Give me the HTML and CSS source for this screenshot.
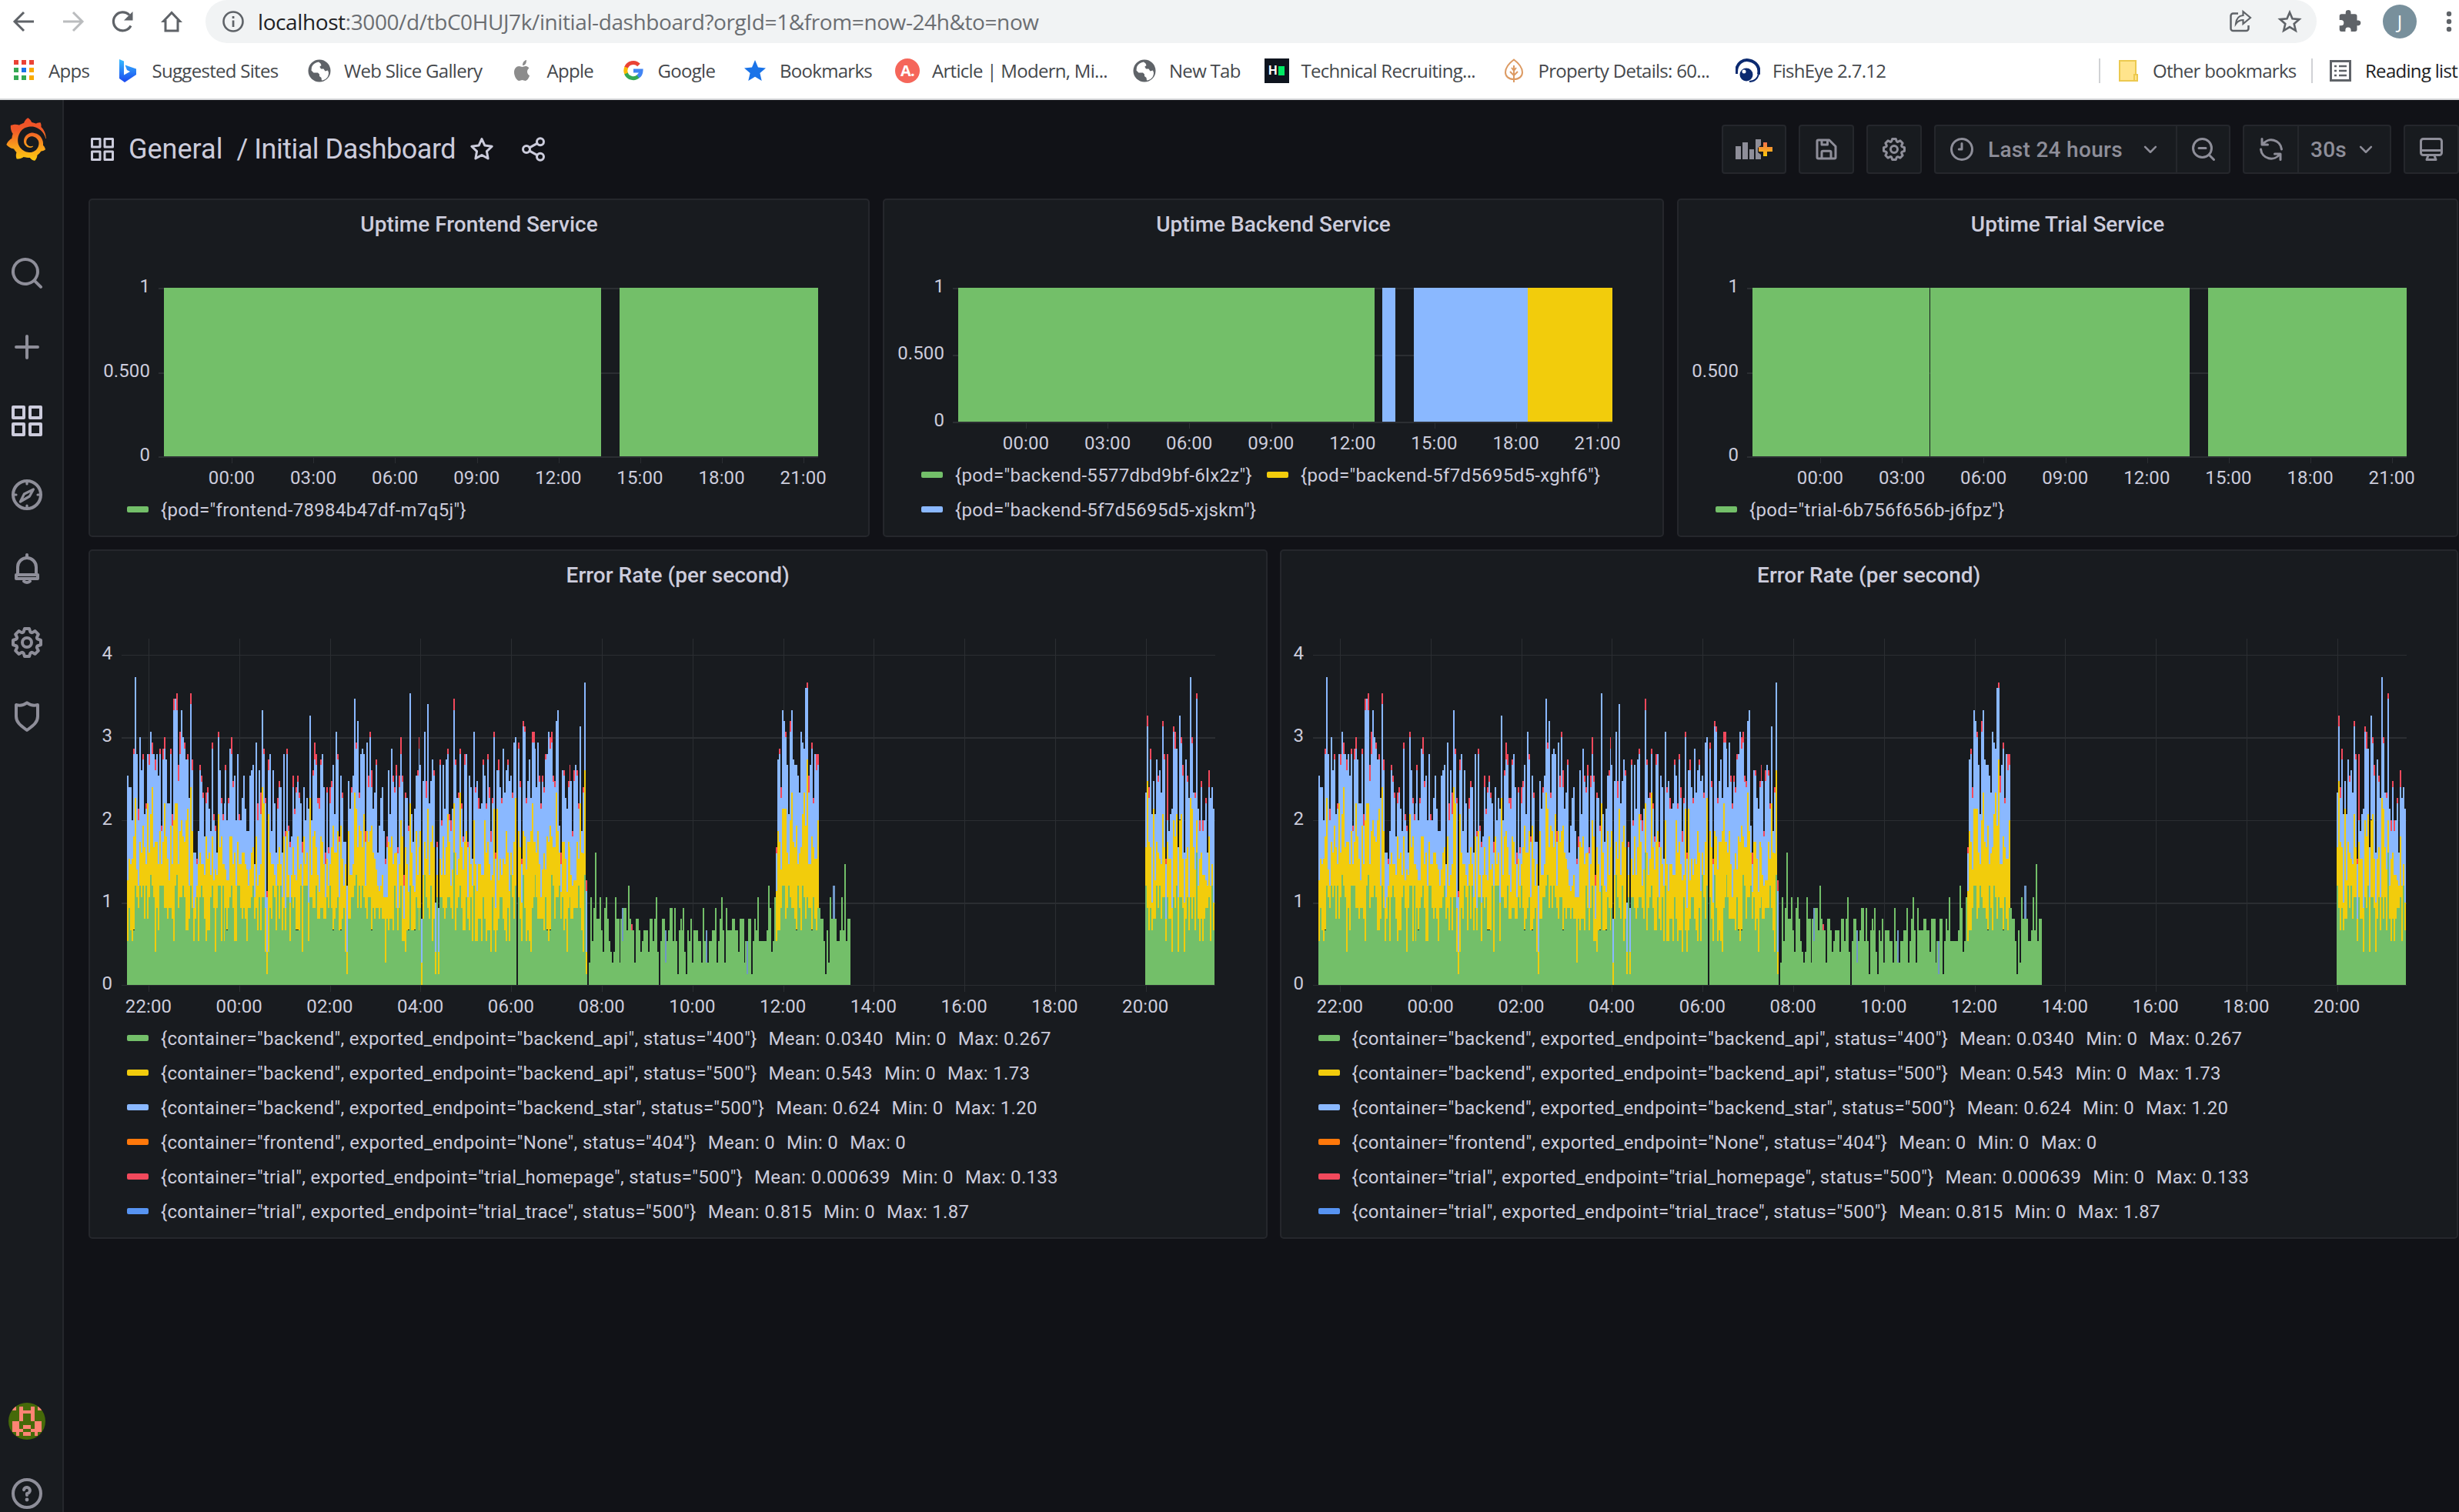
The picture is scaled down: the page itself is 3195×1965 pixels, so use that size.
FILE: index.html
```html
<!DOCTYPE html>
<html lang="en">
<head>
<meta charset="utf-8">
<title>Initial Dashboard - Grafana</title>
<link rel="stylesheet" href="styles.css">
</head>
<body>
<svg class="defs" width="0" height="0">
  <defs>
    <linearGradient id="logo-fill" x1="0" y1="1" x2="0" y2="0"><stop offset="0" stop-color="#fcc911"/><stop offset=".35" stop-color="#f99b1c"/><stop offset=".7" stop-color="#f05a28"/><stop offset="1" stop-color="#f04e28"/></linearGradient>
    <linearGradient id="plus-fill" x1="0" y1="0" x2="0" y2="1"><stop offset="0" stop-color="#f2704a"/><stop offset="1" stop-color="#fbca0a"/></linearGradient>
    <linearGradient id="bing-fill" x1="0" y1="0" x2="0" y2="1"><stop offset="0" stop-color="#37bdff"/><stop offset="1" stop-color="#1b48ef"/></linearGradient>
  </defs>
  <symbol id="apps" viewBox="0 0 24 24"><path d="M3 3h7v7H3zM14 3h7v7h-7zM3 14h7v7H3zM14 14h7v7h-7z" class="ln"/></symbol>
  <symbol id="cog" viewBox="0 0 24 24"><path fill="currentColor" d="M21.32,9.55l-1.89-.63.89-1.78A1,1,0,0,0,20.13,6L18,3.87a1,1,0,0,0-1.15-.19l-1.78.89-.63-1.89A1,1,0,0,0,13.5,2h-3a1,1,0,0,0-.95.68L8.92,4.57,7.14,3.68A1,1,0,0,0,6,3.87L3.87,6a1,1,0,0,0-.19,1.15l.89,1.78-1.89.63A1,1,0,0,0,2,10.5v3a1,1,0,0,0,.68.95l1.89.63-.89,1.78A1,1,0,0,0,3.87,18L6,20.13a1,1,0,0,0,1.15.19l1.78-.89.63,1.89a1,1,0,0,0,.95.68h3a1,1,0,0,0,.95-.68l.63-1.89,1.78.89A1,1,0,0,0,18,20.13L20.13,18a1,1,0,0,0,.19-1.15l-.89-1.78,1.89-.63A1,1,0,0,0,22,13.5v-3A1,1,0,0,0,21.32,9.55ZM20,12.78l-1.2.4A2,2,0,0,0,17.64,16l.57,1.14-1.1,1.1L16,17.64a2,2,0,0,0-2.79,1.16l-.4,1.2H11.22l-.4-1.2A2,2,0,0,0,8,17.64l-1.14.57-1.1-1.1L6.36,16A2,2,0,0,0,5.2,13.18L4,12.78V11.22l1.2-.4A2,2,0,0,0,6.36,8L5.79,6.89l1.1-1.1L8,6.36A2,2,0,0,0,10.82,5.2l.4-1.2h1.56l.4,1.2A2,2,0,0,0,16,6.36l1.14-.57,1.1,1.1L17.64,8a2,2,0,0,0,1.16,2.79l1.2.4ZM12,8a4,4,0,1,0,4,4A4,4,0,0,0,12,8Zm0,6a2,2,0,1,1,2-2A2,2,0,0,1,12,14Z"/></symbol>
  <symbol id="globe" viewBox="0 0 32 32"><circle cx="16" cy="16" r="14.5" fill="#5f6368"/><path fill="#fff" d="M15 4.5c-4 .5-7 2.500-9 6.500l-.5 4.500 3 3h5.500l2 2v2.500l2.500 2 .5 3.500c5-.5 9-4 9-10l-1-3-3.500 1-2-3h-4.500l-1.500-2 3-2.500-1-2.500z M15 9l-3 2 .5 3 4 2 2-.5-1-3z"/></symbol>
</svg>

<header class="browser">
  <div class="toolbar">
    <svg class="nav" viewBox="0 0 40 40"><path d="M33 20H9M20 8L8 20l12 12" fill="none" stroke="#5f6368" stroke-width="3"/></svg>
    <svg class="nav" viewBox="0 0 40 40"><path d="M7 20h24M20 8l12 12-12 12" fill="none" stroke="#babcbe" stroke-width="3"/></svg>
    <svg class="nav" viewBox="0 0 40 40"><path d="M31 25.500A12 12 0 1 1 29 11.500" fill="none" stroke="#5f6368" stroke-width="3.200"/><path d="M33.500 7v11.500H22z" fill="#5f6368"/></svg>
    <svg class="nav" viewBox="0 0 40 40"><path d="M20 8.500L9.500 19.500H12V32h16V19.500h2.500z" fill="none" stroke="#5f6368" stroke-width="3"/></svg>
    <div class="omnibox">
      <svg class="i32" viewBox="0 0 32 32"><circle cx="16" cy="16" r="12.500" fill="none" stroke="#5f6368" stroke-width="2.600"/><path d="M14.700 14.500h2.700V23h-2.700zM14.700 9h2.700v2.900h-2.700z" fill="#5f6368"/></svg>
      <span class="url"><b>localhost</b>:3000/d/tbC0HUJ7k/initial-dashboard?orgId=1&amp;from=now-24h&amp;to=now</span>
      <svg class="i32" viewBox="0 0 32 32"><path d="M13 5.500H6.500a3 3 0 0 0-3 3v16.500a3 3 0 0 0 3 3h17a3 3 0 0 0 3-3v-4" fill="none" stroke="#5f6368" stroke-width="2.500"/><path d="M19.500 3l9.500 8-9.500 8v-5c-4 0-7 1.500-9.500 5 .5-6 3.500-10.500 9.500-11z" fill="none" stroke="#5f6368" stroke-width="2.200"/></svg>
      <svg class="i32" viewBox="0 0 32 32"><path d="M16 4l3.500 8.300 9 .8-6.800 5.900 2.100 8.800-7.800-4.700-7.800 4.700 2.100-8.800-6.800-5.900 9-.8z" fill="none" stroke="#5f6368" stroke-width="2.600"/></svg>
    </div>
    <svg class="nav" viewBox="0 0 40 40"><path fill="#5f6368" d="M30.500 18.500h-2V13a2.700 2.700 0 0 0-2.700-2.700h-5.300v-2a3.400 3.400 0 0 0-6.800 0v2H8.300A2.700 2.700 0 0 0 5.700 13v5.100h2a3.600 3.600 0 0 1 0 7.200h-2v5.100A2.700 2.700 0 0 0 8.300 33h5.100v-2a3.600 3.600 0 0 1 7.200 0v2h5.200a2.700 2.700 0 0 0 2.700-2.700v-5.100h2a3.400 3.400 0 0 0 0-6.700z"/></svg>
    <span class="profile">J</span>
    <svg class="nav" viewBox="0 0 40 40" fill="#5f6368"><circle cx="20" cy="10" r="3.200"/><circle cx="20" cy="20" r="3.200"/><circle cx="20" cy="30" r="3.200"/></svg>
  </div>
  <nav class="bookmarks">
    <a><svg class="i32" viewBox="0 0 32 32"><path fill="#ea4335" d="M3 2h6v6H3zM13 2h6v6h-6zM23 2h6v6h-6z"/><path fill="#34a853" d="M3 12h6v6H3zM3 22h6v6H3z"/><path fill="#1a73e8" d="M13 12h6v6h-6z"/><path fill="#f9ab00" d="M23 12h6v6h-6zM23 22h6v6h-6z"/><path fill="#34a853" d="M13 22h6v6h-6z"/></svg>Apps</a>
    <a><svg class="i32" viewBox="0 0 32 32"><path fill="url(#bing-fill)" d="M5 1l6 2.500v18L19 17l-4-2-2.500-6.500L27 13.500V21L12 31l-7-5z"/></svg>Suggested Sites</a>
    <a><svg class="i32"><use href="#globe"/></svg>Web Slice Gallery</a>
    <a><svg class="i32" viewBox="0 0 32 32"><path fill="#8c8c8c" d="M22 17c0-3 2.500-4.500 2.500-4.500C23 10.500 21 10 20 10c-2 0-3.500 1-4.500 1s-2.500-1-4-1C8 10 5 13 5 18s3.500 11 6.500 11c1.500 0 2.500-1 4-1s2.500 1 4 1c3 0 5.500-5.500 5.500-7 0 0-3-1.300-3-5zM19.500 7.500C21 6 21 3 21 2c-1.500 0-5 2-5 7 1.500 0 2.500-.5 3.500-1.500z"/></svg>Apple</a>
    <a><svg class="i32" viewBox="0 0 32 32" fill="none" stroke-width="5"><path stroke="#ea4335" d="M6.500 12A10 10 0 0 1 23 8.500"/><path stroke="#fbbc05" d="M6.800 20a10 10 0 0 1 0-8.500"/><path stroke="#34a853" d="M6.500 19.500A10 10 0 0 0 22.500 23"/><path stroke="#4285f4" d="M16 16h10a10 10 0 0 1-4 7.500"/></svg>Google</a>
    <a><svg class="i32" viewBox="0 0 32 32"><path fill="#1a73e8" d="M16 2l4 9.500 10 .9-7.600 6.600 2.300 10L16 23.700 7.300 29l2.300-10L2 12.400l10-.9z"/></svg>Bookmarks</a>
    <a><span class="badge-a">A.</span>Article | Modern, Mi...</a>
    <a><svg class="i32"><use href="#globe"/></svg>New Tab</a>
    <a><span class="badge-h"><i>H</i><s></s></span>Technical Recruiting...</a>
    <a><svg class="i32" viewBox="0 0 32 32"><path d="M16 1.500C10 6 5 12 5 18c0 5 4 9 11 9s11-4 11-9c0-6-5-12-11-16.500zM16 31V9M16 22l-5-5M16 22l5-5M16 16l-3-4M16 16l3-4" fill="none" stroke="#dc9a62" stroke-width="2"/></svg>Property Details: 60...</a>
    <a><svg class="i32" viewBox="0 0 32 32"><path fill="none" stroke="#0b2a70" stroke-width="4" d="M1 20C0 4 12 1 18 2.500c9 2 14 9 12 18"/><path fill="none" stroke="#0b2a70" stroke-width="2" d="M30 18c0 8-6 12-12 12"/><circle cx="14" cy="21" r="8.500" fill="#0b2a70"/><circle cx="11" cy="17" r="2.500" fill="#fff"/></svg>FishEye 2.7.12</a>
    <a class="sep"><svg class="i32" viewBox="0 0 32 32"><path d="M5 3h21v18h2v8H5z" fill="#ffe48c" stroke="#ecc94f" stroke-width="2"/><path d="M24 29v-8h3" fill="none" stroke="#ecc94f" stroke-width="2"/></svg>Other bookmarks</a>
    <a class="sep dark"><svg class="i32" viewBox="0 0 32 32"><path d="M3.500 3.500h25v25h-25z" fill="none" stroke="#5f6368" stroke-width="3"/><path d="M8 10h3M14 10h10M8 16h3M14 16h10M8 22h3M14 22h10" stroke="#5f6368" stroke-width="2.500"/></svg>Reading list</a>
  </nav>
</header>

<div class="app">
  <aside class="sidebar">
    <svg class="logo" viewBox="0 0 351 365"><path fill="url(#logo-fill)" d="M342,161.2c-0.6-6.1-1.6-13.1-3.6-20.9c-2-7.7-5-16.2-9.4-25c-4.4-8.8-10.1-17.9-17.5-26.8c-2.9-3.5-6.1-6.9-9.5-10.2c5.1-20.3-6.2-37.9-6.2-37.9c-19.5-1.2-31.9,6.1-36.5,9.4c-0.8-0.3-1.5-0.7-2.3-1c-3.3-1.3-6.7-2.6-10.3-3.7c-3.5-1.1-7.1-2.1-10.8-3c-3.7-0.9-7.4-1.6-11.2-2.2c-0.7-0.1-1.3-0.2-2-0.3c-8.5-27.2-32.9-38.6-32.9-38.6c-27.3,17.3-32.4,41.5-32.4,41.5s-0.1,0.5-0.3,1.4c-1.5,0.4-3,0.9-4.5,1.3c-2.1,0.6-4.2,1.4-6.2,2.2c-2.1,0.8-4.1,1.6-6.2,2.5c-4.1,1.8-8.2,3.8-12.2,6c-3.9,2.2-7.7,4.6-11.4,7.1c-0.5-0.2-1-0.4-1-0.4c-37.8-14.4-71.3,2.9-71.3,2.9c-3.1,40.2,15.1,65.5,18.7,70.1c-0.9,2.5-1.7,5-2.5,7.5c-2.8,9.1-4.9,18.4-6.2,28.1c-0.2,1.4-0.4,2.8-0.5,4.2C18.8,192.7,8.5,228,8.5,228c29.1,33.5,63.1,35.600,63.1,35.600c0,0,0.1-0.1,0.1-0.1c4.3,7.7,9.3,15,14.9,21.9c2.4,2.9,4.8,5.6,7.4,8.3c-10.6,30.4,1.5,55.600,1.5,55.600c32.4,1.2,53.7-14.2,58.2-17.7c3.2,1.1,6.5,2.1,9.8,2.9c10,2.600,20.2,4.1,30.4,4.500c2.5,0.1,5.1,0.2,7.6,0.1l1.2,0l0.8,0l1.6,0l1.6-0.1l0,0.1c15.3,21.8,42.1,24.9,42.1,24.9c19.1-20.1,20.2-40.1,20.2-44.4l0,0c0-0.600,0-1.200,0-1.800c4-2.8,7.8-5.8,11.4-9.1c7.6-6.9,14.3-14.8,19.9-23.3c0.5-0.8,1-1.6,1.5-2.4c21.6,1.2,36.9-13.4,36.9-13.4c-3.6-22.5-16.4-33.5-19.1-35.600l-1-0.7c0.1-1.4,0.2-2.7,0.3-4.1c0.2-2.4,0.2-4.9,0.2-7.3l0-3.8l-0.2-3.500c-0.200-2.500-0.500-5-0.900-7.600c-0.4-2.5-0.8-4.9-1.4-7.4c-2.3-9.7-6.1-18.9-11-27.2c-5-8.3-11.2-15.6-18.3-21.8c-7-6.2-14.9-11.2-23.1-14.9c-8.3-3.7-16.9-6.1-25.5-7.2c-4.3-0.6-8.6-0.8-12.9-0.7l-3.200,0.100c-2.700,0.100-5.500,0.400-8.200,1c-8.6,1.6-16.7,4.7-23.8,9c-7.1,4.3-13.3,9.6-18.3,15.6c-5,6-8.9,12.7-11.6,19.6c-2.7,6.9-4.2,14.1-4.6,21c-0.1,1.7-0.1,3.5-0.1,5.2l0.100,2.700c0.1,0.8,0.1,1.7,0.2,2.5c0.3,3.5,1,6.9,1.9,10.1c1.9,6.5,4.9,12.4,8.6,17.4c3.7,5,8.2,9.1,12.9,12.4c4.7,3.2,9.8,5.5,14.8,7c5,1.5,10,2.1,14.7,2.1c3,0,5.500-0.200,8.300-0.700c1.1-0.2,2.1-0.600,3.1-0.9c2-0.7,4-1.5,5.7-2.4c1.8-0.9,3.4-2,5-3c0.4-0.3,0.9-0.6,1.3-1c1.6-1.3,1.9-3.7,0.6-5.3c-1.1-1.4-3.1-1.8-4.7-0.9c-1.800,0.900-3.500,1.700-5.500,2.400c-1.5,0.5-3.1,0.9-4.7,1.2c-3,0.500-5,0.400-7.900,0.300c-3.7-0.5-7.400-1.600-10.900-3.200c-3.6-1.6-7-3.8-10.1-6.6c-3.1-2.8-5.8-6.1-7.9-9.9c-2.1-3.8-3.6-8-4.3-12.4c-0.3-2.2-0.5-4.5-0.4-6.7c0.100-2.500,0.300-4.500,0.700-7.100c1.7-9.6,6.5-19,13.9-26.1c1.9-1.8,3.9-3.4,6-4.9c2.1-1.5,4.4-2.8,6.8-3.9c2.4-1.1,4.8-2,7.4-2.7c2.5-0.7,5.1-1.1,7.8-1.4c3-0.200,5.500-0.200,8.200-0.100c2.9,0.2,5.7,0.6,8.5,1.3c5.6,1.2,11.1,3.3,16.2,6.1c10.2,5.7,18.9,14.5,24.2,25.1c2.7,5.3,4.6,11,5.5,16.9c0.600,4,0.800,7,0.700,11c0,3-0.200,5-0.600,8.200c-0.400,3.200-1.100,6.500-1.900,9.500c-0.8,3.1-1.8,6.2-3,9.3c-2.4,6-5.6,11.8-9.4,17.1c-7.7,10.6-18.2,19.2-30.2,24.7c-6,2.7-12.3,4.7-18.8,5.7c-3.2,0.6-6.5,0.9-9.8,1l-4.500,0c-1.8,0-3.5-0.1-5.3-0.3c-7-0.5-13.9-1.8-20.7-3.7c-6.7-1.9-13.2-4.6-19.4-7.8c-12.3-6.6-23.4-15.6-32-26.5c-4.3-5.4-8.1-11.3-11.2-17.4c-3.1-6.1-5.6-12.6-7.4-19.1c-1.8-6.6-2.9-13.3-3.4-20.1l-0.2-5.500c0-3,0-5,0.100-7.500c0.1-3.3,0.4-6.8,0.8-10.2c0.4-3.4,1-6.9,1.7-10.3c0.7-3.4,1.5-6.8,2.5-10.2c1.9-6.7,4.3-13.2,7.1-19.3c5.7-12.2,13.1-23.1,22-31.8c2.2-2.2,4.5-4.2,6.9-6.2c2.4-1.9,4.9-3.7,7.5-5.4c2.5-1.7,5.2-3.2,7.9-4.6c8-4,14-6.500,23.500-9c8-2,15-3,24-3.700c5-0.300,9-0.400,14.500-0.200c5.8,0.2,11.5,0.9,17,1.9c11.1,2.1,21.5,5.6,31,10.3c9.5,4.6,17.9,10.3,25.3,16.5c3.500,3,6.500,5.800,10,9.700c3.1,3.3,6,6.6,8.6,10c5.2,6.7,9.4,13.5,12.7,19.9c1.700,3.300,3,6.200,4.600,9.900c1.2,3,2.4,5.900,3.3,8.6c1.5,4.4,2.6,8.3,3.5,11.7c0.3,1.4,1.6,2.3,3,2.1c1.5-0.1,2.6-1.3,2.6-2.8C342.6,170.4,342.5,166.1,342,161.2z"/></svg>
    <svg class="side" viewBox="0 0 24 24"><path fill="currentColor" d="M21.71,20.29,18,16.61A9,9,0,1,0,16.61,18l3.68,3.68a1,1,0,0,0,1.42-1.42ZM11,18a7,7,0,1,1,7-7A7,7,0,0,1,11,18Z"/></svg>
    <svg class="side" viewBox="0 0 24 24"><path class="ln" d="M5 12h14M12 5v14"/></svg>
    <svg class="side active"><use href="#apps"/></svg>
    <svg class="side" viewBox="0 0 24 24"><circle class="ln" cx="12" cy="12" r="9"/><path class="ln thin" d="M12 3v2M12 19v2M3 12h2M19 12h2M16.200 8.500l-2.500 4.500-6 3.500 2.500-5z"/></svg>
    <svg class="side" viewBox="0 0 24 24"><path class="ln" d="M12 3v2M6 16v-5a6 6 0 0 1 12 0v5M5 16h14v2.500H5zM10 20.200c1 1 3 1 4 0"/></svg>
    <svg class="side"><use href="#cog"/></svg>
    <svg class="side" viewBox="0 0 24 24"><path class="ln" d="M12 3.200C10 4.700 7.500 5.200 5 4.500V12c0 4 3 6 7 9 4-3 7-5 7-9V4.500c-2.500.7-5 .2-7-1.300z"/></svg>
    <svg class="avatar" viewBox="0 0 10 10" shape-rendering="crispEdges"><path fill="#466a09" d="M0 0h10v10H0z"/><path fill="#ff8474" d="M1 1h1v1H1zM3 1h1v4H3zM6 1h1v4H6zM4 2h2v1H4zM8 1h1v1H8zM1 5h2v3H1zM7 5h2v3H7zM4 6h2v1H4zM3 7h1v1H3zM6 7h1v1H6zM2 8h1v1H2zM7 8h1v1H7zM4 8h2v1H4z"/></svg>
    <svg class="side help" viewBox="0 0 24 24"><circle class="ln" cx="12" cy="12" r="9"/><path class="ln" d="M10 9.600A2 2 0 1 1 12 12v1"/><circle cx="12" cy="16" r="1.200" fill="currentColor"/></svg>
  </aside>

  <main class="main">
    <div class="pagebar">
      <svg class="i36 light"><use href="#apps"/></svg>
      <h1><span>General</span><span class="slash">/</span><span class="name">Initial Dashboard</span></h1>
      <svg class="i36 light star" viewBox="0 0 24 24"><path class="ln" d="M12 3l2.600 5.700 6.200.8-4.500 4.300 1.100 6.200L12 17l-5.400 3 1.100-6.200-4.500-4.300 6.200-.8z"/></svg>
      <svg class="i36 light" viewBox="0 0 24 24"><g class="ln"><circle cx="6" cy="12" r="3"/><circle cx="18" cy="5.500" r="3"/><circle cx="18" cy="18.500" r="3"/><path d="M8.700 10.600l6.600-3.700M8.700 13.400l6.600 3.700"/></g></svg>
      <div class="actions">
        <button class="wide"><svg width="50" height="36" viewBox="0 0 50 36"><path fill="currentColor" d="M1 14h7v17H1zM10 9h7v22h-7zM19 18h6v13h-6zM27 5h7v8l-4 3v6l4 3v6h-7z"/><path fill="url(#plus-fill)" d="M37 9h5v6h7v6h-7v6h-5v-6h-6v-6h6z"/></svg></button>
        <button><svg class="i36" viewBox="0 0 24 24"><path class="ln" d="M4 5a1 1 0 0 1 1-1h9.500L20 9.500V19a1 1 0 0 1-1 1H5a1 1 0 0 1-1-1zM8 4v4h5V4M8 20v-5.500a1 1 0 0 1 1-1h6a1 1 0 0 1 1 1V20"/></svg></button>
        <button><svg class="i36"><use href="#cog"/></svg></button>
        <div class="group">
          <button class="time"><svg class="i36" viewBox="0 0 24 24"><circle class="ln" cx="12" cy="12" r="9"/><path class="ln" d="M12 7v5H9.500"/></svg><span>Last 24 hours</span><svg class="chev" viewBox="0 0 16 16"><path class="ln" d="M2.500 5.500L8 11l5.500-5.500"/></svg></button>
          <button class="zoom"><svg class="i36" viewBox="0 0 24 24"><circle class="ln" cx="11" cy="11" r="8"/><path class="ln" d="M17 17l4 4M8 11h6"/></svg></button>
        </div>
        <div class="group">
          <button class="sync"><svg class="i36" viewBox="0 0 24 24"><path class="ln" d="M4 3v5h5M4.500 8A9 9 0 0 1 21 12M20 21v-5h-5M19.500 16A9 9 0 0 1 3 12"/></svg></button>
          <button class="rate"><span>30s</span><svg class="chev" viewBox="0 0 16 16"><path class="ln" d="M2.500 5.500L8 11l5.500-5.500"/></svg></button>
        </div>
        <button><svg class="i36" viewBox="0 0 24 24"><path class="ln" d="M3 5a2 2 0 0 1 2-2h14a2 2 0 0 1 2 2v10a2 2 0 0 1-2 2H5a2 2 0 0 1-2-2zM3 13h18M9.500 17L8 21h8l-1.500-4"/></svg></button>
      </div>
    </div>

    <div class="row three">
      <section class="panel"><h2>Uptime Frontend Service</h2><svg class="chart" data-chart="frontend"></svg>
        <ul class="legend"><li class="green">{pod="frontend-78984b47df-m7q5j"}</li></ul></section>
      <section class="panel"><h2>Uptime Backend Service</h2><svg class="chart" data-chart="backend"></svg>
        <ul class="legend"><li class="green">{pod="backend-5577dbd9bf-6lx2z"}</li><li class="yellow">{pod="backend-5f7d5695d5-xghf6"}</li><li class="lblue">{pod="backend-5f7d5695d5-xjskm"}</li></ul></section>
      <section class="panel"><h2>Uptime Trial Service</h2><svg class="chart" data-chart="trial"></svg>
        <ul class="legend"><li class="green">{pod="trial-6b756f656b-j6fpz"}</li></ul></section>
    </div>
    <div class="row two">
      <section class="panel tall"><h2>Error Rate (per second)</h2><svg class="chart" data-chart="errors"></svg>
        <ul class="legend stack">
          <li class="green">{container="backend", exported_endpoint="backend_api", status="400"}<em>Mean: 0.0340</em><em>Min: 0</em><em>Max: 0.267</em></li>
          <li class="yellow">{container="backend", exported_endpoint="backend_api", status="500"}<em>Mean: 0.543</em><em>Min: 0</em><em>Max: 1.73</em></li>
          <li class="lblue">{container="backend", exported_endpoint="backend_star", status="500"}<em>Mean: 0.624</em><em>Min: 0</em><em>Max: 1.20</em></li>
          <li class="orange">{container="frontend", exported_endpoint="None", status="404"}<em>Mean: 0</em><em>Min: 0</em><em>Max: 0</em></li>
          <li class="red">{container="trial", exported_endpoint="trial_homepage", status="500"}<em>Mean: 0.000639</em><em>Min: 0</em><em>Max: 0.133</em></li>
          <li class="blue">{container="trial", exported_endpoint="trial_trace", status="500"}<em>Mean: 0.815</em><em>Min: 0</em><em>Max: 1.87</em></li>
        </ul></section>
      <section class="panel tall"><h2>Error Rate (per second)</h2><svg class="chart" data-chart="errors"></svg>
        <ul class="legend stack">
          <li class="green">{container="backend", exported_endpoint="backend_api", status="400"}<em>Mean: 0.0340</em><em>Min: 0</em><em>Max: 0.267</em></li>
          <li class="yellow">{container="backend", exported_endpoint="backend_api", status="500"}<em>Mean: 0.543</em><em>Min: 0</em><em>Max: 1.73</em></li>
          <li class="lblue">{container="backend", exported_endpoint="backend_star", status="500"}<em>Mean: 0.624</em><em>Min: 0</em><em>Max: 1.20</em></li>
          <li class="orange">{container="frontend", exported_endpoint="None", status="404"}<em>Mean: 0</em><em>Min: 0</em><em>Max: 0</em></li>
          <li class="red">{container="trial", exported_endpoint="trial_homepage", status="500"}<em>Mean: 0.000639</em><em>Min: 0</em><em>Max: 0.133</em></li>
          <li class="blue">{container="trial", exported_endpoint="trial_trace", status="500"}<em>Mean: 0.815</em><em>Min: 0</em><em>Max: 1.87</em></li>
        </ul></section>
    </div>
  </main>
</div>
<script src="charts.js"></script>
</body>
</html>
```
FILE: styles.css
```css
* { box-sizing: border-box; }
body { margin: 0; height: 1965px; overflow: hidden; background: #111217; color: #ccccdc; font-family: Roboto, sans-serif; display: flex; flex-direction: column; }
.defs { position: absolute; }
svg { flex: none; display: block; }
.ln { fill: none; stroke: currentColor; stroke-width: 2; stroke-linejoin: round; stroke-linecap: round; }
.thin { stroke-width: 1.6; }

/* browser chrome */
.browser { height: 130px; flex: none; background: #fff; border-bottom: 2px solid #d5d6d8; font-family: "Open Sans", sans-serif; overflow: hidden; }
.toolbar { display: flex; align-items: center; height: 56px; padding-left: 11px; gap: 24px; }
.nav { width: 40px; height: 40px; }
.i32 { width: 32px; height: 32px; }
.omnibox { display: flex; align-items: center; flex: none; width: 2743px; height: 56px; border-radius: 28px; background: #f1f3f4; padding: 0 19px 0 20px; gap: 32px; }
.url { flex: 1; margin-left: -16px; font-size: 28px; letter-spacing: -0.4px; color: #6b6e72; white-space: nowrap; }
.url b { font-weight: 400; color: #202124; }
.profile { flex: none; width: 44px; height: 44px; margin: 0 -2px; border-radius: 50%; background: #78909c; color: #fff; font: 24px/44px "Open Sans", sans-serif; text-align: center; }
.bookmarks { display: grid; grid-template-columns: 134.5px 249.5px 263.5px 144px 158.5px 198px 308px 171.5px 308px 304.5px 496px 276px 168px; padding-left: 15px; height: 72px; align-items: center; font-size: 24px; line-height: 30px; letter-spacing: -0.7px; color: #45484c; }
.bookmarks a { display: flex; align-items: center; gap: 16px; height: 32px; white-space: nowrap; }
.bookmarks .sep::before { content: ""; width: 2px; height: 32px; margin: 0 4px 0 -22px; background: #d0d2d5; }
.bookmarks .sep { margin-left: -2px; }
.bookmarks .dark { color: #202124; }
.badge-a { width: 32px; height: 32px; border-radius: 50%; background: #f5665a; color: #fff; font: bold 20px/32px "Open Sans", sans-serif; text-align: center; }
.badge-h { display: flex; align-items: center; justify-content: center; gap: 2px; width: 32px; height: 32px; background: #0e141e; color: #fff; }
.badge-h i { font: bold 16px/16px "Liberation Sans", sans-serif; }
.badge-h s { width: 8px; height: 12px; background: #00ea64; }

/* shell */
.app { display: flex; flex: 1; min-height: 0; }
.sidebar { display: flex; flex-direction: column; width: 83px; flex: none; padding: 23px 0 0 11px; background: #181b1f; border-right: 2px solid #25272c; color: #8e8e99; }
.logo { width: 54px; height: 56px; margin: 0 0 122px -4px; }
.side { width: 48px; height: 48px; margin-bottom: 48px; }
.side.active { color: #ccccdc; }
.avatar { width: 48px; height: 48px; border-radius: 50%; margin: auto 0 46px; }
.side.help { margin-bottom: 0; }
.main { flex: 1; padding-left: 32px; }
.pagebar { display: flex; align-items: center; height: 128px; }
.i36 { width: 36px; height: 36px; }
.light { color: #ccccdc; }
h1 { display: flex; margin: 0 16px 0 16px; font-size: 36px; font-weight: 400; white-space: nowrap; }
.slash { margin: 0 8px 0 18px; }
.name { letter-spacing: -0.5px; }
.star { margin-right: 31px; }
.actions { display: flex; gap: 16px; margin-left: auto; }
button { display: flex; align-items: center; justify-content: center; width: 72px; height: 64px; padding: 0; flex: none; background: #181b1f; border: 2px solid #25272c; border-radius: 4px; color: #8e8e99; font: 500 28px Roboto, sans-serif; letter-spacing: 0.3px; }
button.wide { width: 84px; }
.group { display: flex; }
.group button:first-child { border-radius: 4px 0 0 4px; }
.group button:last-child { border-radius: 0 4px 4px 0; margin-left: -2px; }
button.time { width: 316px; justify-content: flex-start; padding-left: 16px; gap: 16px; }
.time .chev { margin-left: 10px; }
button.zoom { width: 71px; }
button.sync { width: 73px; }
button.rate { width: 122px; gap: 15px; padding-right: 6px; }
.chev { width: 20px; height: 20px; }

/* panels */
.row { display: grid; gap: 17px; margin: 0 1px 16px 0; }
.three { grid-template-columns: repeat(3, 1fr); }
.two { grid-template-columns: repeat(2, 1fr); gap: 16px; }
.panel { display: flex; flex-direction: column; height: 440px; min-width: 0; background: #181b1f; border: 2px solid #25272c; border-radius: 5px; }
.panel.tall { height: 896px; }
h2 { margin: 0; height: 66px; flex: none; font-size: 28px; line-height: 64px; font-weight: 500; text-align: center; }
.chart { flex: 1; width: 100%; min-height: 0; overflow: hidden; font-size: 24px; fill: #ccccdc; letter-spacing: 0.1px; }
.legend { display: flex; flex-wrap: wrap; flex: none; list-style: none; margin: 0; padding: 0 40px 12px 48px; column-gap: 19px; font-size: 24px; letter-spacing: 0.32px; white-space: nowrap; }
.legend li { display: flex; align-items: center; height: 45px; padding-top: 2px; }
.legend li::before { content: ""; width: 28px; height: 8px; margin: -2px 16px 0 0; border-radius: 2px; background: var(--c); }
.stack { flex-direction: column; letter-spacing: 0.3px; }
.legend em { font-style: normal; margin-left: 15px; }
.green { --c: #73bf69; }
.yellow { --c: #f2cc0c; }
.lblue { --c: #8ab8ff; }
.orange { --c: #ff780a; }
.red { --c: #f2495c; }
.blue { --c: #5794f2; }
```
FILE: charts.js
```js
const GREEN = '#73bf69', YELLOW = '#f2cc0c', LBLUE = '#8ab8ff', RED = '#f2495c', GRID = '#2b2e32';

const rect = (x, y, w, h, fill) => `<rect x="${x}" y="${y}" width="${w}" height="${h}" fill="${fill}"/>`;
const label = (x, y, text, anchor) => `<text x="${x}" y="${y}" text-anchor="${anchor}">${text}</text>`;

// Uptime panels: bars are [start, end, colour] measured from the plot's left edge.
const uptime = {
  frontend: { base: 267, bars: [[0, 568, GREEN], [592, 850, GREEN]] },
  backend: { base: 222, bars: [[0, 541, GREEN], [551, 568, LBLUE], [592, 740, LBLUE], [740, 850, YELLOW]] },
  trial: { base: 267, bars: [[0, 230, GREEN], [231, 568, GREEN], [592, 850, GREEN]] }
};

function drawUptime(svg, { base, bars }) {
  const left = 96, top = 48;
  let out = '<g shape-rendering="crispEdges">';
  [top, (top + base) / 2, base].forEach(y => { out += rect(left - 7, Math.round(y), 857, 2, GRID); });
  for (let i = 0; i < 8; i++) out += rect(Math.round(left + 88 + i * 106.2), base, 1, 9, GRID);
  bars.forEach(([a, b, c]) => { out += rect(left + a, top, b - a, base - top, c); });
  out += '</g>';
  out += label(78, top + 6, '1', 'end') + label(78, (top + base) / 2 + 6, '0.500', 'end') + label(78, base + 6, '0', 'end');
  for (let i = 0; i < 8; i++) out += label(left + 88 + i * 106.1, base + 36, String(i * 3).padStart(2, '0') + ':00', 'middle');
  svg.innerHTML = out;
}

// Stack totals in fifteenths; the letter gives the height of the trial_homepage part.
const segments = [
  { from: 0, to: 506, kind: 'mix', data: '38 36 36 30 43r 56 42 32s 45 39 42r 31 33r 42 42s 46 44s 42 41s 42 38 43r 29r 43s 45s 41 33 33 43r 31s 52s 52 53t 40t 46u 50 45 44r 41 42r 34 53s 41s 24 24 23r 28 40r 38r 35r 27 35s 36r 32 28 44r 31r 29r 24 46r 39 34r 31r 33 40r 30 34r 43 45t 37r 38 30 42 31r 30 34 38 32 28 28 38 39 40 22 44 33t 39 35u 50 43r 34r 17r 41s 42 28 39 33 24 34s 37r 36 24 42 28r 43r 29r 26r 27 38s 32r 36r 38r 35r 33 26s 36 30 34 32 49 30 39r 44t 42s 34r 34s 41r 42 36 24s 36r 25r 36t 37r 40 31 46 42r 27r 38 35r 26 26 18 37 32 36r 38 52 44r 48 35r 42 43 42 28s 44 38s 46r 39t 32 35 41r 24 29 34 36 28 23r 27s 39 31 43 38r 36r 40s 25r 38s 45t 38r 20s 35r 34 29r 53 31 26 32 38 39r 45s 40 12 37 46 37t 51 33 37 41 39r 15 26r 14 41r 30r 40 32 41 43r 31r 30s 32 52s 41r 34 35r 43r 33r 27r 42s 42 26r 38 36 23 46 36r 37 34s 32 33 41r 38 33r 42r 36s 28s 34r 46r 24r 39 41s 36 34r 43 35 39 41r 37 38 35r 44 45' },
  { from: 508, to: 598, kind: 'mix', data: '44r 37r 23r 48r 47r 34r 37 41 34 46s 46s 43 36 44 38r 33r 38r 36r 42r 42 46 45s 46s 38r 37r 48 50 29 24s 39 39r 34 32 37r 40t 37 28r 39s 40 39r 33r 47 28 36r 55 19s' },
  { from: 600, to: 843, kind: 'green', data: '4 16 8 14 24 12 12 16 10 6 14 16 12 8 6 4 6 16 12 12 4 12 8b 14 14 10 18 12 11r 10 4 12 12 10 6 8 10 10 10 6 12 12 8 12 16 6 0 8 12 12 4b 8 10 14 14 8 14 8 2 10 12 10 14 6 2 10 8 12 4 10 10 10 8 8 4 14 8 4b 4 8 8 10 10 14 4 8 12 16 10 4 14 10 10 10 12 12 10 10 6 12 12 12 4 8 2b 12 12 2 8 12 10 16 8 8 8 8 8 10 18 14 6 8 16' },
  { from: 843, to: 899, kind: 'mix', data: '25r 41 43r 36s 50 48 46r 40 31 48s 50 41 40 40 38 35 46 44 43 54 55r 38t 40 44r 34r 42 42t 42s' },
  { from: 899, to: 940, kind: 'green', data: '14 12 12 8 2 10 4 16 12 12b 12 8 8 10 16 10 22 8 12 12' },
  { from: 1323, to: 1413, kind: 'mix', data: '35 49s 36s 43s 31 37 31 41 38r 39 35 48r 42r 23r 42v 28 31 32 47r 46t 43 25 49 45r 40s 24 41 38r 34 56 45r 35 35r 53r 32 30s 37r 30s 30 34r 24 39t 34 36 32' }
];
const RED_PARTS = { r: 1, s: 2, t: 3, u: 4, v: 12 };

function drawErrors(svg) {
  const left = 48, base = 498, unit = 107.25;
  let seed = 11;
  const rnd = () => (seed = (seed * 16807) % 2147483647) / 2147483647;
  const swing = () => rnd() + rnd() - 1;
  let out = '<g shape-rendering="crispEdges">';
  for (let v = 0; v <= 4; v++) out += rect(left - 7, Math.round(base - v * unit), 1421, v % 2 ? 2 : 1, GRID);
  for (let i = 0; i < 12; i++) out += rect(Math.round(left + 28 + i * 117.8), 48, 1, 459, GRID);
  for (const s of segments) {
    const cells = s.data.split(' '), step = (s.to - s.from) / cells.length;
    cells.forEach((cell, i) => {
      const total = parseInt(cell, 10), flag = cell.replace(/\d+/, '');
      const x0 = Math.round(left + s.from + i * step), x1 = Math.round(left + s.from + (i + 1) * step);
      const bar = (a, b, c) => { if (b > a) out += rect(x0, (base - b * unit / 15).toFixed(1), x1 - x0, ((b - a) * unit / 15).toFixed(1), c); };
      if (s.kind === 'green') {
        bar(0, total, GREEN);
        if (flag === 'r') bar(10, 11, RED);
        if (flag === 'b') bar(total, total + 6, '#6f97c8');
        return;
      }
      const pink = RED_PARTS[flag] || 0, body = total - pink;
      let g, y;
      if (total < 20) {
        g = total < 13 ? 0 : 2;
        y = g + 4;
      } else {
        g = 2 * Math.round((total * 0.25 + 3.8 + swing() * 8) / 2);
        g = Math.max(4, Math.min(g, 26, body - 6));
        y = Math.max(g + 4, Math.round(total * 0.64 + swing() * 8));
        y = Math.min(y, body - 4);
      }
      bar(0, g, GREEN);
      bar(g, y, YELLOW);
      bar(y, body, LBLUE);
      bar(body, total, RED);
    });
  }
  out += '</g>';
  for (let v = 0; v <= 4; v++) out += label(29, base - v * unit + 6, v, 'end');
  for (let i = 0; i < 12; i++) out += label(left + 28 + i * 117.75, base + 36, String((22 + 2 * i) % 24).padStart(2, '0') + ':00', 'middle');
  svg.innerHTML = out;
}

document.querySelectorAll('[data-chart]').forEach(svg => {
  const name = svg.dataset.chart;
  name === 'errors' ? drawErrors(svg) : drawUptime(svg, uptime[name]);
});
```
